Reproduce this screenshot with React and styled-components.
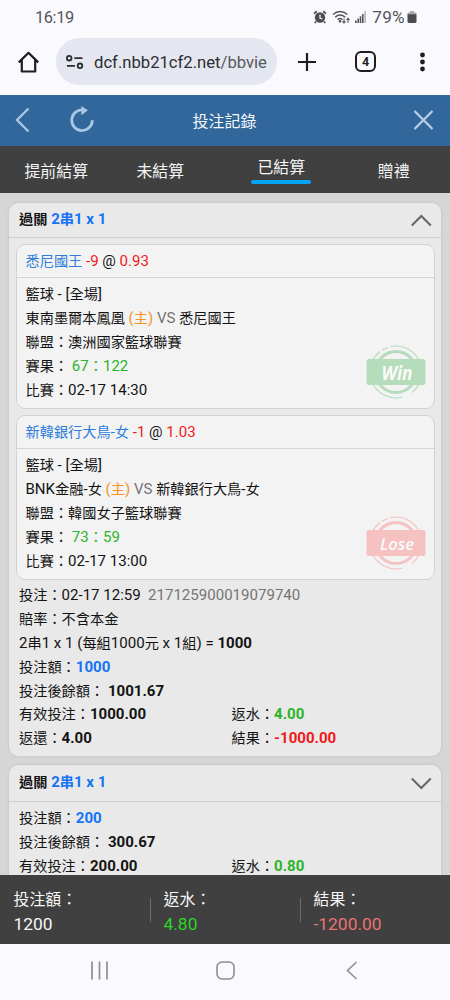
import React from "react";
import styled, { createGlobalStyle } from "styled-components";

const colors = {
    blue: "#1573f5",
    team: "#2e7ddb",
    red: "#f01a1a",
    green: "#2cb52a",
    orange: "#f8921e",
    gray: "#757575",
    dark: "#404040",
    chrome: "#fafafe",
}

const GlobalStyle = createGlobalStyle`
   *{
       box-sizing: border-box;
   }
   body{
       margin: 0;
       background-color: ${colors.chrome};
       font-family: Roboto, "Noto Sans CJK TC", sans-serif;
   }
   svg{
       display: block;
       flex: none;
   }
`

const Screen = styled.div`
   width: 450px;
   height: 1000px;
   display: flex;
   flex-direction: column;
   overflow: hidden;
   background-color: ${colors.chrome};
   color: #141414;
`
const StatusBar = styled.div`
   height: 34px;
   padding: 0 33px 0 35px;
   display: flex;
   align-items: center;
   justify-content: space-between;
   font-size: 16.4px;
   letter-spacing: -0.4px;
   color: #55555a;
`
const StatusIcons = styled.div`
   display: flex;
   align-items: center;
   gap: 5px;
   font-size: 17.2px;
   letter-spacing: 0.3px;
   span{
       margin: 0 -3px 0 1px;
   }
`
const Browser = styled.div`
   height: 61px;
   padding: 0 18px 6px 18px;
   display: flex;
   align-items: center;
`
const Address = styled.div`
   width: 221px;
   height: 47px;
   margin: 0 21px 0 17px;
   padding: 1px 0 0 9px;
   border-radius: 24px;
   background-color: #e4e7f0;
   display: flex;
   align-items: center;
   gap: 10px;
   font-size: 16.65px;
   color: #2c2d31;
   span{
       color: #56585e;
   }
`
const TabCount = styled.div`
   width: 21px;
   height: 21px;
   margin: 0 44px 0 39px;
   border: 2px solid #1d1d20;
   border-radius: 6px;
   text-align: center;
   font-size: 12.5px;
   font-weight: 700;
   line-height: 17px;
   color: #1d1d20;
`
const TitleBar = styled.header`
   height: 51px;
   flex: none;
   padding: 0 16px 2px 15px;
   display: grid;
   grid-template-columns: 1fr auto 1fr;
   align-items: center;
   background-color: #31679b;
   color: #f4f7fa;
   font-size: 16px;
`
const TitleActions = styled.div`
   display: flex;
   align-items: center;
   gap: 39px;
   ${p => p.$end ? "justify-content: flex-end;" : ""}
`
const Tabs = styled.nav`
   height: 47px;
   flex: none;
   display: grid;
   grid-template-columns: repeat(4, 1fr);
   background-color: ${colors.dark};
   color: #f5f5f5;
   font-size: 15.9px;
`
const Tab = styled.div`
   display: flex;
   flex-direction: column;
   align-items: center;
   padding-top: ${p => p.$active ? 9 : 13}px;
   padding-right: ${p => p.$shift || 0}px;
   line-height: 25px;
   &::after{
       content: "";
       width: 60px;
       height: 4px;
       border-radius: 2px;
       background-color: ${p => p.$active ? "#06a4f5" : "transparent"};
   }
`
const List = styled.main`
   flex: 1;
   min-height: 0;
   overflow: hidden;
   padding: 10px 9px 0;
   background-color: #d6d6d6;
`
const Card = styled.section`
   margin-bottom: 9px;
   border-radius: 9px;
   background-color: #e9e9e9;
   box-shadow: 0 0 3px rgba(0,0,0,0.12);
   font-size: 14.2px;
   line-height: 23.9px;
`
const CardHead = styled.div`
   height: ${p => p.$tall ? 37 : 35}px;
   padding: 0 9px 0 10px;
   display: flex;
   align-items: center;
   justify-content: space-between;
   border-bottom: 1px solid #d0d0d0;
   font-weight: 700;
`
const Legs = styled.div`
   padding: 6px 6.5px 0 6.5px;
   display: flex;
   flex-direction: column;
   gap: 6px;
`
const Leg = styled.article`
   position: relative;
   height: 165px;
   border: 1px solid #d2d2d2;
   border-radius: 9px;
   background-color: #f3f3f3;
`
const LegHead = styled.div`
   height: 33px;
   padding: 0 9px;
   border-bottom: 1px solid #d4d4d4;
   line-height: 32px;
`
const LegBody = styled.div`
   padding: 5px 9px;
`
const Stamp = styled.svg`
   position: absolute;
   right: 8px;
   bottom: 8px;
`
const Summary = styled.div`
   padding: ${p => p.$top}px 10px 4.5px;
`
const Row = styled.div`
   height: 23.9px;
   white-space: pre;
`
const PairRow = styled(Row)`
   display: grid;
   grid-template-columns: 212.5px 1fr;
`
const Ink = styled.span`
   color: ${p => colors[p.$tone] || "inherit"};
   font-weight: ${p => p.$bold ? 700 : "inherit"};
`
// latin runs are set a little larger than the chinese text around them
const Latin = styled.span`
   font-size: 15.05px;
   line-height: 1;
`
const Totals = styled.footer`
   height: 69px;
   flex: none;
   display: grid;
   grid-template-columns: repeat(3, 150px);
   align-items: center;
   background-color: ${colors.dark};
   color: #f7f7f7;
`
const Total = styled.div`
   height: 24px;
   padding: 4px 0 0 12.5px;
   border-left: 1px solid ${p => p.$first ? "transparent" : "#6c6c6c"};
   display: flex;
   flex-direction: column;
   justify-content: center;
   font-size: 15.9px;
   line-height: 24px;
`
const Amount = styled.div`
   font-size: 17.4px;
   color: ${p => p.color};
`
const NavBar = styled.div`
   height: 56px;
   flex: none;
   padding: 0 0 3px 91px;
   display: grid;
   grid-template-columns: 125px 130px auto;
   align-items: center;
`

const legs = [
    {
        pick: "悉尼國王", line: "-9", odds: "0.93",
        home: "東南墨爾本鳳凰", away: "悉尼國王",
        league: "澳洲國家籃球聯賽", score: "67：122", time: "02-17 14:30", result: "Win",
    },
    {
        pick: "新韓銀行大鳥-女", line: "-1", odds: "1.03",
        home: "BNK金融-女", away: "新韓銀行大鳥-女",
        league: "韓國女子籃球聯賽", score: "73：59", time: "02-17 13:00", result: "Lose",
    },
]

function Text({ children, tone, bold }) {
    return (
        <Ink $tone={tone} $bold={bold}>
            {children.split(/([\x20-\x7e]+)/).map((part, i) => i % 2 ? <Latin key={i}>{part}</Latin> : part)}
        </Ink>
    )
}

function Chevron({ up }) {
    return (
        <svg width="22" height="14" viewBox="0 0 22 14" fill="none" stroke="#666" strokeWidth="2">
            <path d={up ? "M1.8 12.5 11.3 3 20.8 12.5" : "M1.8 2.5 11.3 12 20.8 2.5"} />
        </svg>
    )
}

function ResultStamp({ result }) {
    const win = result === "Win"
    const color = win ? "#b5dcbb" : "#f5c1c1"
    return (
        <Stamp width="60" height="56" viewBox="0 0 60 56">
            <g fill="none" stroke={color}>
                <circle cx="30" cy="28" r="20.5" strokeWidth="3" />
                <path d="M24.5 2.6A26 26 0 0 1 54.5 20M6 18A26 26 0 0 1 14 7.5M16 6.2A26 26 0 0 1 22 3.4M54 37A26 26 0 0 1 46 48.5M36 53.2A26 26 0 0 1 6 38" strokeWidth="1.1" />
            </g>
            <rect x="0.5" y="15" width="59" height="26" rx="2.5" fill={color} />
            <text
                x="31"
                y={win ? 35.5 : 34.5}
                textAnchor="middle"
                fill="#fafafa"
                fontFamily="Open Sans, sans-serif"
                fontStyle="italic"
                fontWeight={win ? 700 : 600}
                fontSize={win ? 19.5 : 17}
                textLength={win ? 31 : 34}
                lengthAdjust="spacingAndGlyphs"
            >
                {result}
            </text>
        </Stamp>
    )
}

function BetLeg({ leg }) {
    return (
        <Leg>
            <LegHead>
                <Text tone="team">{leg.pick}</Text>
                <Text tone="red">{" " + leg.line}</Text>
                <Text>{" @ "}</Text>
                <Text tone="red">{leg.odds}</Text>
            </LegHead>
            <LegBody>
                <Row><Text>籃球 - [全場]</Text></Row>
                <Row>
                    <Text>{leg.home + " "}</Text>
                    <Text tone="orange">(主)</Text>
                    <Text tone="gray">{" VS "}</Text>
                    <Text>{leg.away}</Text>
                </Row>
                <Row><Text>{"聯盟：" + leg.league}</Text></Row>
                <Row><Text>{"賽果： "}</Text><Text tone="green">{leg.score}</Text></Row>
                <Row><Text>{"比賽：" + leg.time}</Text></Row>
            </LegBody>
            <ResultStamp result={leg.result} />
        </Leg>
    )
}

function BetHead({ open }) {
    return (
        <CardHead $tall={!open}>
            <div><Text>{"過關 "}</Text><Text tone="blue">2串1 x 1</Text></div>
            <Chevron up={open} />
        </CardHead>
    )
}

function Amounts({ stake, balance, valid, rebate }) {
    return (
        <>
            <Row>投注額：<Text tone="blue" bold>{stake}</Text></Row>
            <Row>投注後餘額：<Text bold>{" " + balance}</Text></Row>
            <PairRow>
                <div>有效投注：<Text bold>{valid}</Text></div>
                <div>返水：<Text tone="green" bold>{rebate}</Text></div>
            </PairRow>
        </>
    )
}

export default function App() {
    return (
        <Screen>
            <GlobalStyle />
            <StatusBar>
                16:19
                <StatusIcons>
                    <svg width="14" height="14" viewBox="0 0 14 14">
                        <circle cx="7" cy="7.5" r="5.2" fill="#4b4b50" />
                        <path d="M1 3.6 3.8 1.2M13 3.6 10.2 1.2M3 11.5 1.8 13M11 11.5 12.2 13" stroke="#4b4b50" strokeWidth="1.8" />
                        <path d="M7 4.5V8L9.4 9" fill="none" stroke="#fff" strokeWidth="1.2" />
                    </svg>
                    <svg width="18" height="14" viewBox="0 0 18 14" fill="none" stroke="#55555a" strokeWidth="1.4">
                        <path d="M1 4.5Q8 -1.5 15.5 4.5M3.2 7.1Q8 3 13.2 7.1M5.6 9.6Q8 7.6 10.3 9.6" />
                        <circle cx="8" cy="11.3" r="0.7" fill="#55555a" />
                        <path d="M12 8.5V13M10.4 11.4 12 13 13.6 11.4M16 13V8.3M14.5 9.9 16 8.3 17.5 9.9" strokeWidth="1.1" />
                    </svg>
                    <svg width="11" height="12" viewBox="0 0 11 12" fill="#55555a">
                        <path d="M0 9.5h1.6V12H0zM2.4 7.5H4V12H2.4zM4.7 5.2h1.6V12H4.7zM7 3h1.6v9H7z" />
                        <path d="M9.3 0h1.6v12H9.3z" fill="#b4b4b8" />
                    </svg>
                    <span>79%</span>
                    <svg width="10" height="12" viewBox="0 0 10 12">
                        <path d="M3 0h4v1.5h1.5Q9.5 1.5 9.5 2.8V4h-9V2.8Q.5 1.5 1.5 1.5H3z" fill="#aaaab0" />
                        <path d="M.5 3.2h9v7.3Q9.5 12 8 12H2Q.5 12 .5 10.5z" fill="#4b4b50" />
                    </svg>
                </StatusIcons>
            </StatusBar>
            <Browser>
                <svg width="21" height="22" viewBox="0 0 21 22" fill="none" stroke="#1d1d20" strokeWidth="2.2" strokeLinejoin="round">
                    <path d="M.8 11.4 10.5 1.8 20.2 11.4M3.8 9V20.5H17.2V9" />
                </svg>
                <Address>
                    <svg width="19" height="15" viewBox="0 0 19 15" fill="none" stroke="#2c2d31" strokeWidth="1.8">
                        <circle cx="4.2" cy="3.2" r="2.3" />
                        <circle cx="15" cy="10.8" r="2.3" />
                        <path d="M9.3 3.2H17.5M2 10.8H10" />
                    </svg>
                    <div>dcf.nbb21cf2.net<span>/bbvie</span></div>
                </Address>
                <svg width="18" height="18" viewBox="0 0 18 18" stroke="#1d1d20" strokeWidth="2.2">
                    <path d="M9 0V18M0 9H18" />
                </svg>
                <TabCount>4</TabCount>
                <svg width="5" height="20" viewBox="0 0 5 20" fill="#1d1d20">
                    <circle cx="2.5" cy="3" r="2.4" />
                    <circle cx="2.5" cy="10" r="2.4" />
                    <circle cx="2.5" cy="17" r="2.4" />
                </svg>
            </Browser>

            <TitleBar>
                <TitleActions>
                    <svg width="15" height="26" viewBox="0 0 15 26" fill="none" stroke="#a9c6e3" strokeWidth="2.4">
                        <path d="M13.5 1.5 2 13 13.5 24.5" />
                    </svg>
                    <svg width="26" height="28" viewBox="0 1 26 28" fill="none" stroke="#a9c6e3" strokeWidth="2.8">
                        <path d="M14 5A10.3 10.3 0 1 0 23.3 15.2" />
                        <path d="M12.3 1 19 5.3 12.3 10.3z" fill="#a9c6e3" stroke="none" />
                    </svg>
                </TitleActions>
                投注記錄
                <TitleActions $end>
                    <svg width="21" height="20" viewBox="0 0 21 20" stroke="#b8d0e8" strokeWidth="2.2">
                        <path d="M1.5 1 19.5 19M19.5 1 1.5 19" />
                    </svg>
                </TitleActions>
            </TitleBar>
            <Tabs>
                <Tab>提前結算</Tab>
                <Tab $shift={17}>未結算</Tab>
                <Tab $active>已結算</Tab>
                <Tab>贈禮</Tab>
            </Tabs>

            <List>
                <Card>
                    <BetHead open />
                    <Legs>
                        {legs.map(leg => <BetLeg key={leg.pick} leg={leg} />)}
                    </Legs>
                    <Summary $top={4}>
                        <Row><Text>{"投注：02-17 12:59 "}</Text> <Ink $tone="gray"><Latin>217125900019079740</Latin></Ink></Row>
                        <Row>賠率：不含本金</Row>
                        <Row><Text>{"2串1 x 1 (每組1000元 x 1組) = "}</Text><Text bold>1000</Text></Row>
                        <Amounts stake="1000" balance="1001.67" valid="1000.00" rebate="4.00" />
                        <PairRow>
                            <div>返還：<Text bold>4.00</Text></div>
                            <div>結果：<Text tone="red" bold>-1000.00</Text></div>
                        </PairRow>
                    </Summary>
                </Card>
                <Card>
                    <BetHead />
                    <Summary $top={5}>
                        <Amounts stake="200" balance="300.67" valid="200.00" rebate="0.80" />
                    </Summary>
                </Card>
            </List>

            <Totals>
                <Total $first>
                    投注額：
                    <Amount>1200</Amount>
                </Total>
                <Total>
                    返水：
                    <Amount color="#2fd32b">4.80</Amount>
                </Total>
                <Total>
                    結果：
                    <Amount color="#ee7272">-1200.00</Amount>
                </Total>
            </Totals>
            <NavBar>
                <svg width="17" height="19" viewBox="0 0 17 19" stroke="#8e8e93" strokeWidth="1.7">
                    <path d="M1 .5V18.5M8.5 .5V18.5M16 .5V18.5" />
                </svg>
                <svg width="19" height="19" viewBox="0 0 19 19" fill="none" stroke="#8e8e93" strokeWidth="1.6">
                    <rect x="1" y="1" width="17" height="17" rx="5" />
                </svg>
                <svg width="12" height="19" viewBox="0 0 12 19" fill="none" stroke="#8e8e93" strokeWidth="1.6">
                    <path d="M10.5 1 1.5 9.5 10.5 18" />
                </svg>
            </NavBar>
        </Screen>
    )
}
